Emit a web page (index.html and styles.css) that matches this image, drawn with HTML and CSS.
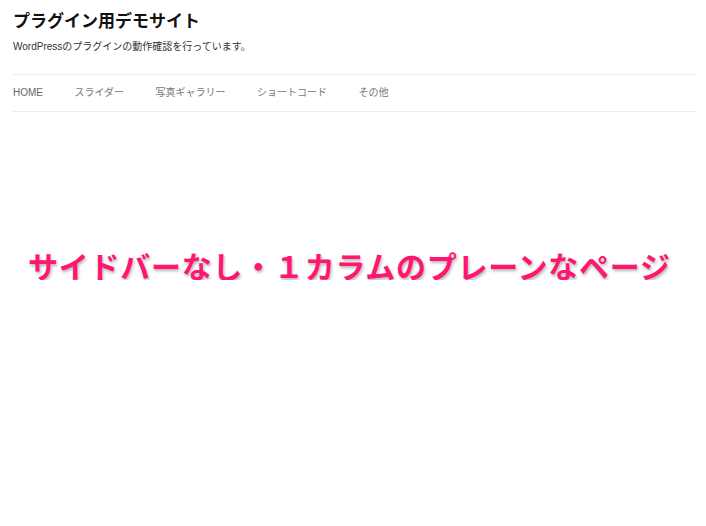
FILE: index.html
```
<!DOCTYPE html>
<html lang="ja">
<head>
<meta charset="utf-8">
<title>プラグイン用デモサイト</title>
<link rel="stylesheet" href="styles.css">
</head>
<body>
<div class="page">
  <header class="site-header">
    <h1 class="site-title">プラグイン用デモサイト</h1>
    <p class="site-desc">WordPressのプラグインの動作確認を行っています。</p>
  </header>
  <nav class="main-nav">
    <a class="nav-item current" href="#">HOME</a>
    <a class="nav-item" href="#">スライダー</a>
    <a class="nav-item" href="#">写真ギャラリー</a>
    <a class="nav-item" href="#">ショートコード</a>
    <a class="nav-item" href="#">その他</a>
  </nav>
  <main class="content">
    <p class="banner">サイドバーなし・１カラムのプレーンなページ</p>
  </main>
</div>
</body>
</html>
```
FILE: styles.css
```
html, body {
  margin: 0;
  padding: 0;
  background: #fff;
}
body {
  font-family: "Liberation Sans", "Noto Sans CJK JP", sans-serif;
  color: #222;
}
.page {
  padding: 13px 9px 0 13px;
}
.site-title {
  margin: 0;
  font-size: 17px;
  line-height: 17px;
  font-weight: bold;
  color: #111;
}
.site-desc {
  margin: 11px 0 0;
  font-size: 10px;
  line-height: 11px;
  color: #333;
}
.main-nav {
  margin-top: 22px;
  border-top: 1px solid #ececec;
  border-bottom: 1px solid #ececec;
  height: 36px;
  display: flex;
  align-items: center;
  gap: 31.5px;
}
.nav-item {
  font-size: 10px;
  line-height: 10px;
  color: #777;
  text-decoration: none;
}
.nav-item.current {
  color: #6b6660;
}
.content {
  padding-left: 15px;
}
.banner {
  margin: 138px 0 0;
  font-family: "Noto Sans CJK JP", sans-serif;
  font-size: 30px;
  line-height: 30px;
  font-weight: bold;
  letter-spacing: 0.75px;
  color: #ff1670;
  white-space: nowrap;
  -webkit-text-stroke: 6px #fff;
  paint-order: stroke fill;
  text-shadow: 1px 2px 3px rgba(0,0,0,0.3);
}
```
